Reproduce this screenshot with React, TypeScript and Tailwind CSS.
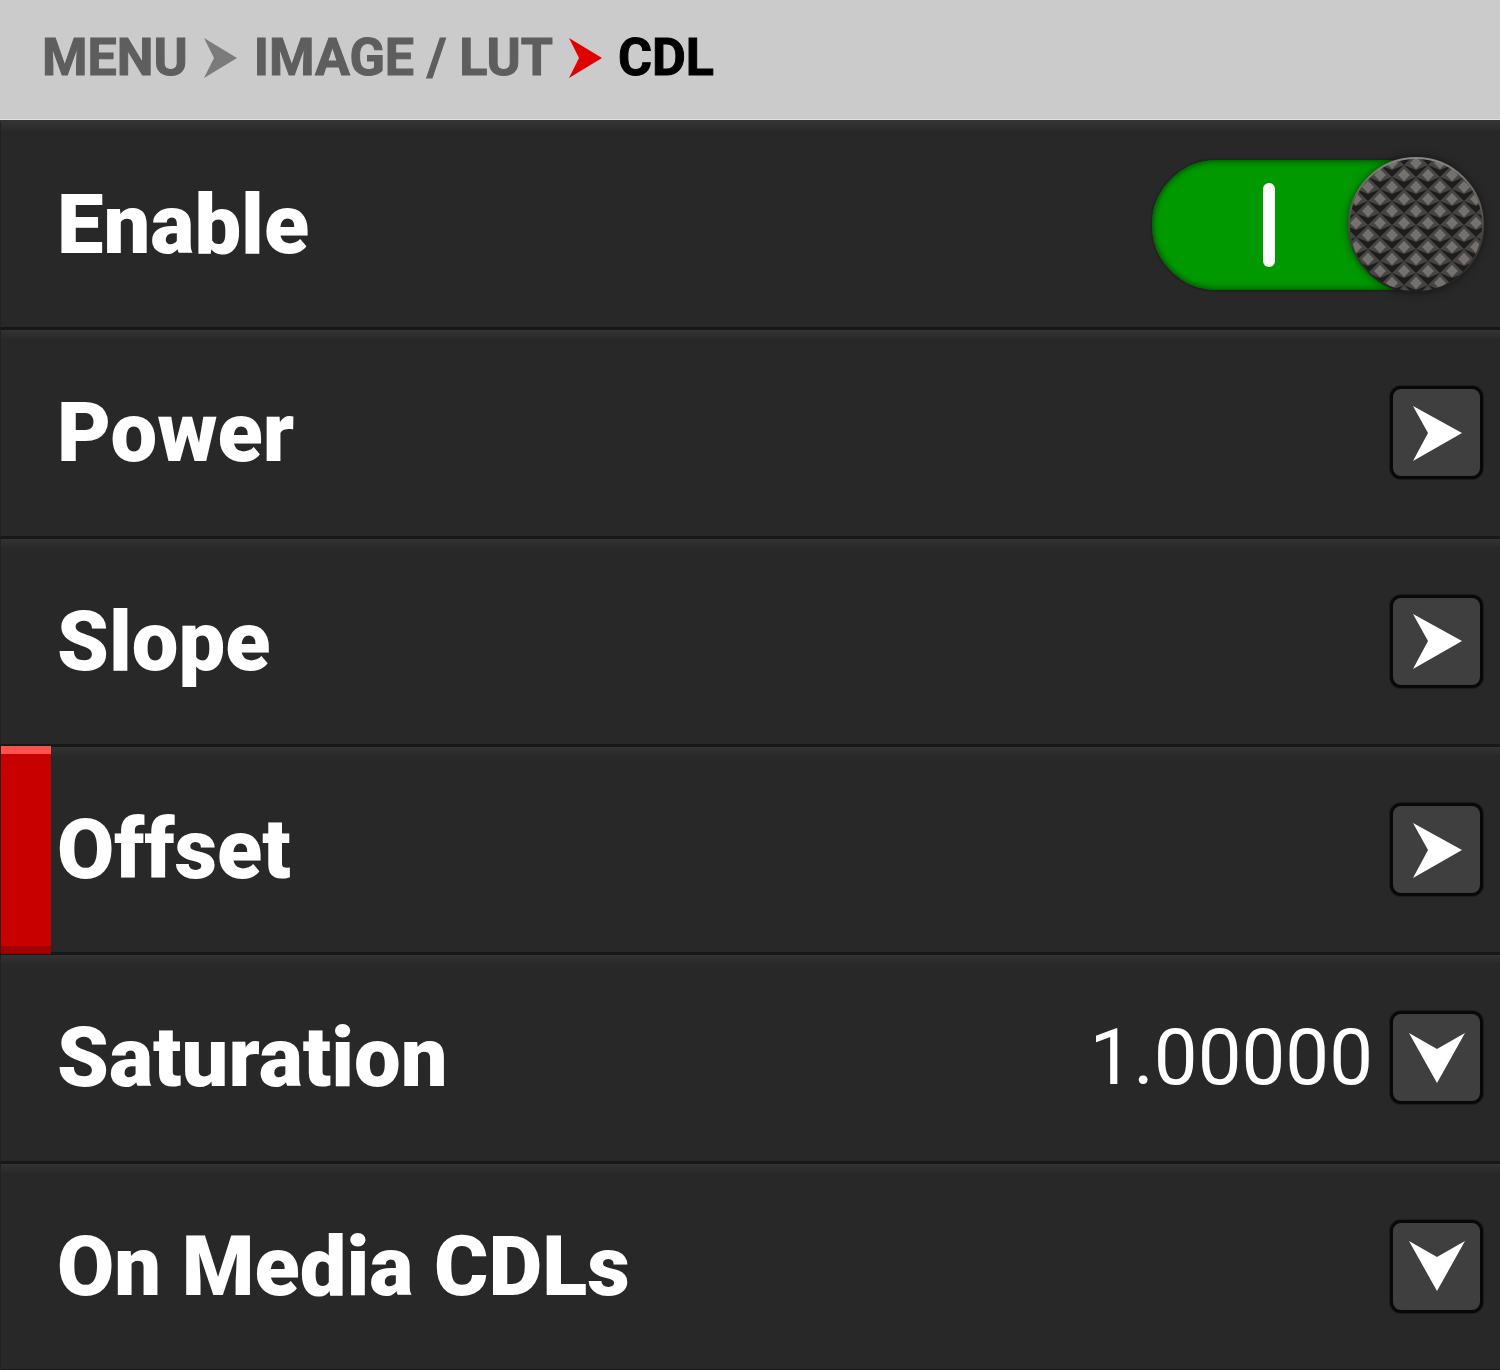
import React from 'react';

const rows = [
  { label: 'Enable', control: 'toggle' },
  { label: 'Power', control: 'right' },
  { label: 'Slope', control: 'right' },
  { label: 'Offset', control: 'right', active: true },
  { label: 'Saturation', control: 'down', value: '1.00000' },
  { label: 'On Media CDLs', control: 'down' },
];

// knob tile is repeated at the centre and the four corners of the pattern cell
const tileOffsets = [
  [0, 0],
  [-12, -12],
  [12, -12],
  [-12, 12],
  [12, 12],
];

function Crumb({ color }: { color: string }) {
  return (
    <svg width="34" height="40" viewBox="0 0 34 40" className="shrink-0">
      <path d="M1 0 L34 20 L1 40 L11 20 Z" fill={color} />
    </svg>
  );
}

function ArrowButton({ down }: { down?: boolean }) {
  return (
    <div className="flex h-[93px] w-[93px] shrink-0 items-center justify-center rounded-[11px] border-[3px] border-[#080808] bg-[#3f3f3f] shadow-[0_0_0_1px_#1c1c1c]">
      <svg width="56" height="56" viewBox="0 0 56 56">
        {down ? (
          <path d="M0 3 L28 19 L56 3 L28 53 Z" fill="#fff" />
        ) : (
          <path d="M4 1 L53 28 L4 56 L19 28 Z" fill="#fff" />
        )}
      </svg>
    </div>
  );
}

function Toggle() {
  return (
    <div className="relative -mr-[1px] h-[136px] w-[334px] shrink-0">
      <div className="absolute inset-y-[1px] left-0 right-[30px] rounded-full border-[2px] border-[#232323] bg-[#009900] shadow-[inset_0_0_7px_rgba(0,0,0,0.65)]" />
      <div className="absolute left-[113px] top-[26px] h-[84px] w-[12px] rounded-full bg-white" />
      <svg
        width="136"
        height="136"
        viewBox="0 0 136 136"
        className="absolute right-0 top-0 drop-shadow-[0_0_4px_rgba(0,0,0,0.5)]"
      >
        <defs>
          <pattern id="knurl" x="8" y="20" width="24" height="24" patternUnits="userSpaceOnUse">
            <rect width="24" height="24" fill="#1c1c1c" />
            {tileOffsets.map(([dx, dy]) => (
              <g key={`${dx}-${dy}`} transform={`translate(${dx} ${dy})`}>
                <path d="M12 0 L24 12 L12 17 L0 12 Z" fill="#464543" />
                <path d="M12 4 L18 10 L12 16 L6 10 Z" fill="#75716e" />
              </g>
            ))}
          </pattern>
          <linearGradient id="rim" x1="0" y1="0" x2="0" y2="1">
            <stop offset="0" stopColor="#8a8784" />
            <stop offset="0.5" stopColor="#4a4947" />
            <stop offset="1" stopColor="#1e1e1e" />
          </linearGradient>
        </defs>
        <circle cx="68" cy="68" r="67" fill="url(#knurl)" stroke="url(#rim)" strokeWidth="2" className="blur-[0.5px]" />
      </svg>
    </div>
  );
}

export default function App() {
  return (
    <div className="h-[1370px] w-[1500px] overflow-hidden bg-[#282828] font-['Roboto',sans-serif]">
      <div className="flex h-[120px] items-center gap-[15px] border-b border-[#e2e2e2] bg-[#cbcbcb] pb-[4px] pl-[42px] text-[52px] font-bold [-webkit-text-stroke:1px_currentColor]">
        <span className="text-[#5e5e5e]">MENU</span>
        <Crumb color="#7b7b7b" />
        <span className="ml-[2px] text-[#5e5e5e]">IMAGE / LUT</span>
        <Crumb color="#e00000" />
        <span className="ml-[1px] text-black">CDL</span>
      </div>
      <div className="bg-[#333333] pt-[2px]">
        {rows.map((row) => (
          <div
            key={row.label}
            className="relative flex h-[208.33px] items-center justify-between border-b-[3px] border-l border-b-[#171717] border-l-[#222222] bg-[linear-gradient(#333333,#282828_10px)] pl-[56px] pr-[17px]"
          >
            {row.active && (
              <div className="absolute -bottom-[2px] -top-[1px] left-0 w-[50px] border-b-[8px] border-t-[8px] border-b-[#a00000] border-t-[#ff5050] bg-[#c80000]" />
            )}
            <span className="relative pt-[1px] text-[83px] font-black text-white">{row.label}</span>
            <div className="flex items-center gap-[17px]">
              {row.value && <span className="text-[78px] font-normal text-white">{row.value}</span>}
              {row.control === 'toggle' && <Toggle />}
              {row.control === 'right' && <ArrowButton />}
              {row.control === 'down' && <ArrowButton down />}
            </div>
          </div>
        ))}
      </div>
    </div>
  );
}
